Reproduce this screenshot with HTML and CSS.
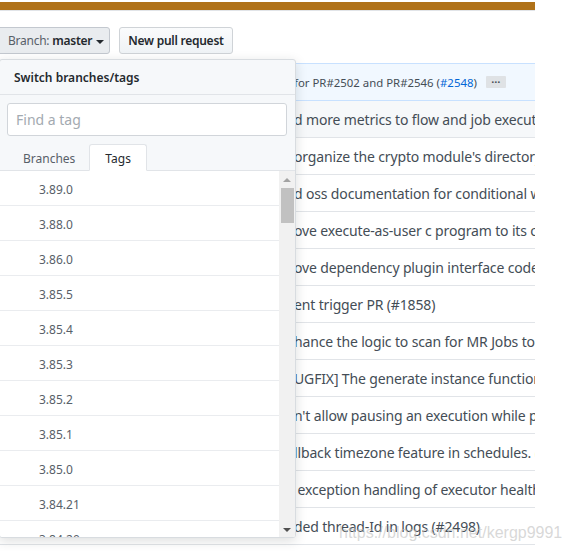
FILE: index.html
```html
<!DOCTYPE html>
<html lang="en">
<head>
    <meta charset="UTF-8">
    <title>azkaban - tags</title>
    <link rel="stylesheet" href="styles.css">
</head>
<body>

<div class="topbar"></div>

<!-- branch / PR buttons -->
<div class="toolbar">
    <button class="btn btn-branch"><span class="muted">Branch:</span>&nbsp;<b>master</b><span class="caret"></span></button>
    <button class="btn btn-pr">New pull request</button>
</div>

<!-- commit list behind the menu -->
<div class="commits">
    <div class="commit latest">for PR#2502 and PR#2546 (<a href="#">#2548</a>)<span class="more">…</span></div>
    <div class="commit hover">d more metrics to flow and job execution</div>
    <div class="commit">organize the crypto module's directory structure</div>
    <div class="commit">d oss documentation for conditional workflow</div>
    <div class="commit">ove execute-as-user c program to its own module</div>
    <div class="commit">ove dependency plugin interface code to spi</div>
    <div class="commit">ent trigger PR (#1858)</div>
    <div class="commit">hance the logic to scan for MR Jobs to kill</div>
    <div class="commit">UGFIX] The generate instance function may fail</div>
    <div class="commit">n't allow pausing an execution while preparing</div>
    <div class="commit">llback timezone feature in schedules. (#2511)</div>
    <div class="commit"> exception handling of executor health check</div>
    <div class="commit">ded thread-Id in logs (#2498)</div>
</div>

<!-- switch branches/tags menu -->
<div class="menu">
    <div class="menu-header">Switch branches/tags</div>
    <div class="menu-filter">
        <input type="text" placeholder="Find a tag">
    </div>
    <div class="menu-tabs">
        <span class="tab">Branches</span>
        <span class="tab active">Tags</span>
    </div>
    <div class="menu-body">
        <ul class="tag-list">
            <li>3.89.0</li>
            <li>3.88.0</li>
            <li>3.86.0</li>
            <li>3.85.5</li>
            <li>3.85.4</li>
            <li>3.85.3</li>
            <li>3.85.2</li>
            <li>3.85.1</li>
            <li>3.85.0</li>
            <li>3.84.21</li>
            <li>3.84.20</li>
        </ul>
        <div class="scrollbar">
            <span class="arrow up"></span>
            <span class="thumb"></span>
            <span class="arrow down"></span>
        </div>
    </div>
</div>

<div class="watermark">https://blog.csdn.net/kergp9991</div>

</body>
</html>
```

FILE: styles.css
```css
body {
    margin: 0;
    font-family: "Noto Sans", "Open Sans", sans-serif;
    color: #24292e;
    background: #fff;
    position: relative;
    overflow: hidden;
    height: 551px;
}
.topbar {
    width: 535px;
    height: 8px;
    margin-top: 2px;
    background: #b07219;
    border-bottom: 1px solid #e1e4e8;
}
.toolbar {
    display: flex;
    gap: 9px;
    padding-top: 16px;
    height: 27px;
}
.btn {
    display: inline-flex;
    align-items: center;
    height: 27px;
    padding: 0 8px;
    font-family: inherit;
    font-size: 12px;
    font-weight: 600;
    letter-spacing: -0.25px;
    white-space: nowrap;
    color: #24292e;
    background: linear-gradient(#fafbfc, #eff3f6);
    border: 1px solid #cfd3d7;
    border-radius: 3px;
}
.btn-branch {
    margin-left: -3px;
    padding: 0 5px 0 10px;
    font-weight: 400;
    background: #e9ecef;
    border-color: #c3c8cf;
}
.muted {
    color: #586069;
}
.btn-branch b {
    font-weight: 600;
    color: #24292e;
}
.caret {
    display: inline-block;
    margin-left: 4px;
    margin-top: 2px;
    border-top: 4px solid #24292e;
    border-left: 4px solid transparent;
    border-right: 4px solid transparent;
}
.commits {
    margin-top: 9px;
    width: 535px;
}
.commit {
    height: 36px;
    display: flex;
    align-items: center;
    padding-left: 294px;
    border-bottom: 1px solid #e1e4e8;
    font-size: 14px;
    letter-spacing: -0.15px;
    color: #444d56;
    white-space: pre;
    overflow: hidden;
}
.commit.latest {
    height: 36px;
    font-size: 11.4px;
    letter-spacing: 0;
    background: #f1f8ff;
    border-top: 1px solid #c8e1ff;
    border-bottom-color: #c8e1ff;
}
.commit.hover {
    background: #f6f8fa;
}
.commit a {
    color: #0366d6;
    text-decoration: none;
}
.more {
    display: inline-block;
    margin-left: 9px;
    width: 20px;
    height: 12px;
    line-height: 6px;
    text-align: center;
    font-size: 11px;
    font-weight: 600;
    color: #444d56;
    background: #dfe2e5;
    border-radius: 1px;
}
.menu {
    position: absolute;
    top: 59px;
    left: -1px;
    width: 295px;
    height: 477px;
    display: flex;
    flex-direction: column;
    background: #f6f8fa;
    border: 1px solid #d8dce0;
    border-radius: 3px;
    box-shadow: 0 3px 12px rgba(27, 31, 35, 0.15);
    overflow: hidden;
}
.menu-header {
    height: 34px;
    line-height: 35px;
    padding-left: 14px;
    font-size: 12px;
    font-weight: 600;
    border-bottom: 1px solid #e1e4e8;
}
.menu-filter {
    padding: 8px 8px 9px 7px;
}
.menu-filter input {
    box-sizing: border-box;
    width: 100%;
    height: 33px;
    padding: 0 8px;
    font-family: inherit;
    font-size: 14px;
    border: 1px solid #d1d5da;
    border-radius: 3px;
    background: #fff;
}
.menu-filter input::placeholder {
    color: #a3aab1;
}
.menu-tabs {
    display: flex;
    align-items: flex-end;
    height: 25px;
    padding-left: 6px;
    border-bottom: 1px solid #e1e4e8;
}
.tab {
    height: 25px;
    line-height: 27px;
    padding: 0 14px 0 17px;
    font-size: 12px;
    color: #586069;
}
.tab.active {
    height: 25px;
    margin-bottom: -1px;
    padding: 0 15px;
    color: #24292e;
    background: #fff;
    border: 1px solid #e1e4e8;
    border-bottom: 1px solid #fff;
    border-radius: 3px 3px 0 0;
}
.menu-body {
    flex: 1;
    display: flex;
    background: #fff;
    overflow: hidden;
}
.tag-list {
    flex: 1;
    margin: 0;
    padding: 0;
    list-style: none;
}
.tag-list li {
    height: 34px;
    line-height: 37px;
    padding-left: 39px;
    font-size: 12px;
    color: #586069;
    border-bottom: 1px solid #eaecef;
}
.scrollbar {
    width: 16px;
    display: flex;
    flex-direction: column;
    align-items: center;
    background: #f1f1f1;
}
.arrow {
    width: 0;
    height: 0;
    border-left: 4px solid transparent;
    border-right: 4px solid transparent;
}
.arrow.up {
    margin-top: 7px;
    border-bottom: 4px solid #a3a3a3;
}
.arrow.down {
    margin-top: auto;
    margin-bottom: 5px;
    border-top: 4px solid #505050;
}
.thumb {
    width: 13px;
    height: 35px;
    margin-top: 6px;
    background: #c1c1c1;
}
.watermark {
    position: absolute;
    left: 339px;
    top: 524px;
    font-family: "Liberation Sans", Arial, sans-serif;
    font-size: 16px;
    color: rgba(190, 190, 190, 0.6);
    white-space: nowrap;
}
```
